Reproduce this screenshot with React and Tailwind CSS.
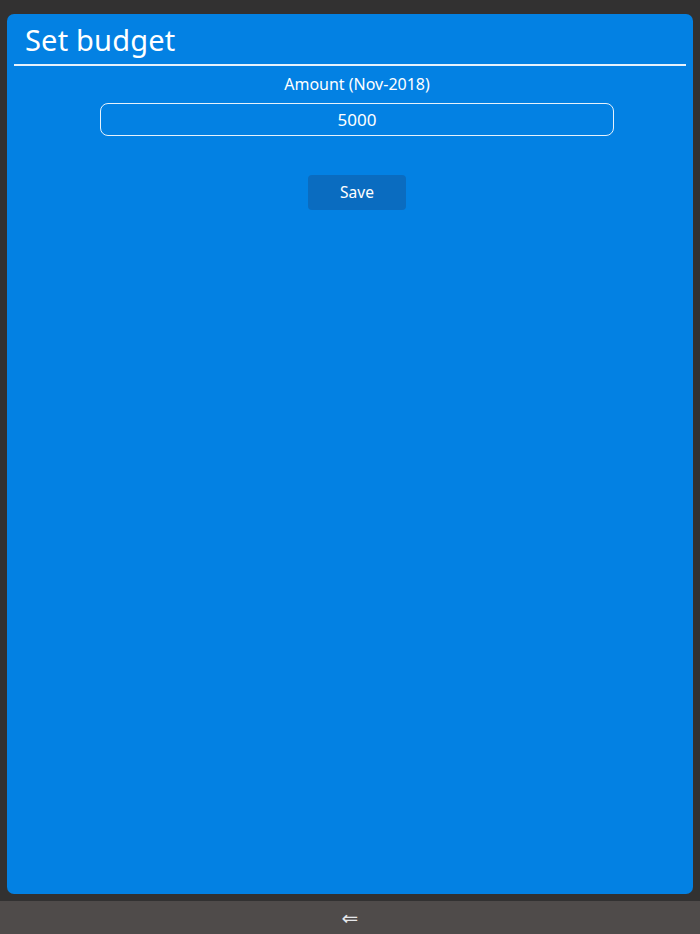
import React from "react";

export default function App() {
  return (
    <div
      className="w-[700px] h-[934px] bg-[#323131] flex flex-col text-white"
      style={{ fontFamily: '"Noto Sans", "Open Sans", sans-serif' }}
    >
      <div className="flex-1 pt-[14px] px-[7px] pb-[7px] flex">
        <div className="flex-1 bg-[#0381e3] rounded-[7px] flex flex-col px-[7px]">
          <div className="h-[50px] flex items-center pl-[11px]">
            <h1 className="text-[29px] leading-none tracking-[0.2px]">Set budget</h1>
          </div>
          <div className="h-[2px] bg-white/90" />
          <div className="flex flex-col items-center pl-[14px]">
            <div className="mt-[8px] text-[16px] leading-[20px]">Amount (Nov-2018)</div>
            <div className="mt-[9px] w-[514px] h-[33px] border-[1.5px] border-white/90 rounded-[8px] flex items-center justify-center text-[17px]">
              5000
            </div>
            <button className="mt-[39px] w-[98px] h-[35px] bg-[#0a6cc0] rounded-[4px] text-[15.5px] text-white">
              Save
            </button>
          </div>
        </div>
      </div>
      <div className="h-[33px] bg-[#4f4b4a] flex items-center justify-center">
        <span className="text-[20px] leading-none text-gray-200" style={{ fontFamily: '"DejaVu Sans", sans-serif' }}>⇐</span>
      </div>
    </div>
  );
}
